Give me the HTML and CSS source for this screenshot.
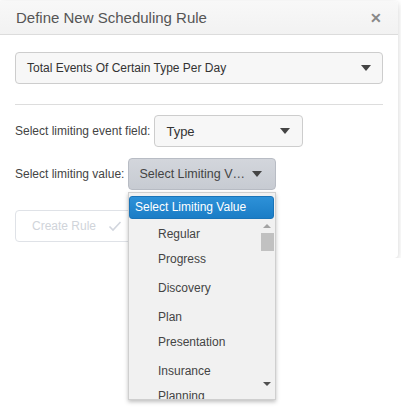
FILE: index.html
```html
<!DOCTYPE html>
<html>
<head>
<meta charset="utf-8">
<link rel="stylesheet" href="styles.css">
</head>
<body>
<div class="dialog">
  <div class="header">
    <span class="title">Define New Scheduling Rule</span>
    <span class="close">&#x2715;</span>
  </div>
  <div class="content">
    <div class="select wide"><span>Total Events Of Certain Type Per Day</span><i class="caret"></i></div>
    <div class="sep"></div>
    <div class="row row1">
      <label>Select limiting event field:</label>
      <div class="select field"><span>Type</span><i class="caret"></i></div>
    </div>
    <div class="row row2">
      <label>Select limiting value:</label>
      <div class="select value active"><span>Select Limiting V…</span><i class="caret"></i></div>
    </div>
    <div class="btn">
      <span>Create Rule</span>
      <svg width="14" height="12" viewBox="0 0 14 12"><path d="M1.5 6.5 L5 10 L12.5 2" fill="none" stroke="#d2d6de" stroke-width="1.6"/></svg>
    </div>
  </div>
</div>
<div class="dropdown">
  <div class="hl">Select Limiting Value</div>
  <div class="opts">
    <div class="list">
      <div class="opt">Regular</div>
      <div class="opt">Progress</div>
      <div class="opt gap">Discovery</div>
      <div class="opt gap">Plan</div>
      <div class="opt">Presentation</div>
      <div class="opt gap">Insurance</div>
      <div class="opt">Planning</div>
    </div>
    <div class="scroll">
      <i class="up"></i>
      <div class="thumb"></div>
      <i class="down"></i>
    </div>
  </div>
</div>
</body>
</html>
```
FILE: styles.css
```css
html, body {
  margin: 0;
  padding: 0;
  background: #fff;
  font-family: "Liberation Sans", Arial, sans-serif;
  font-size: 12px;
  color: #444;
}
.dialog {
  width: 398px;
  margin-top: 1px;
  background: #fff;
  border-radius: 0 4px 4px 0;
  box-shadow: 0 2px 6px rgba(0,0,0,0.18);
}
.header {
  height: 33px;
  display: flex;
  align-items: center;
  justify-content: space-between;
  padding: 0 16px;
  background: linear-gradient(#f8f8f8, #f2f2f2);
  border-bottom: 1px solid #dcdcdc;
  border-radius: 0 4px 0 0;
}
.title {
  font-size: 15px;
  color: #555;
}
.close {
  font-size: 14px;
  font-weight: bold;
  color: #888;
}
.content {
  padding: 17px 15px 16px 15px;
}
.select {
  box-sizing: border-box;
  height: 32px;
  display: flex;
  align-items: center;
  justify-content: space-between;
  padding: 0 11px 0 11px;
  border: 1px solid #cdcdcd;
  border-radius: 4px;
  background: #f7f7f7;
  color: #333;
  font-size: 13px;
}
.wide {
  width: 368px;
  font-size: 12px;
}
.caret {
  width: 0;
  height: 0;
  border-left: 5px solid transparent;
  border-right: 5px solid transparent;
  border-top: 6px solid #444;
}
.sep {
  height: 1px;
  background: #ddd;
  margin: 20px 0 10px;
  width: 368px;
}
.row {
  display: flex;
  align-items: center;
  gap: 4px;
}
.row label {
  color: #444;
}
.row2 {
  margin-top: 11px;
}
.field {
  width: 149px;
  padding-right: 12px;
}
.value {
  width: 148px;
  padding-left: 10px;
  padding-right: 13px;
  font-size: 12.5px;
}
.active {
  background: linear-gradient(#d3d6dc, #c7cbd2);
  border-color: #b8bcc4;
  color: #444;
}
.btn {
  margin-top: 20px;
  box-sizing: border-box;
  width: 130px;
  height: 32px;
  display: flex;
  align-items: center;
  gap: 12px;
  padding-left: 16px;
  border: 1px solid #dfe2e7;
  border-radius: 4px;
  color: #d0d4da;
}
.dropdown {
  position: absolute;
  left: 128px;
  top: 192px;
  width: 148px;
  height: 208px;
  box-sizing: border-box;
  background: #f1f1f1;
  border: 1px solid #cfcfcf;
  box-shadow: 0 2px 4px rgba(0,0,0,0.25);
  display: flex;
  flex-direction: column;
  overflow: hidden;
}
.hl {
  margin: 3px 1px 0 0;
  height: 23px;
  box-sizing: border-box;
  line-height: 21px;
  padding-left: 5px;
  border-radius: 3px;
  background: linear-gradient(#2d91d8, #1b7dc6);
  border: 1px solid #1a74b8;
  color: #fff;
}
.opts {
  flex: 1;
  display: flex;
  overflow: hidden;
}
.list {
  flex: 1;
  padding-top: 3px;
}
.opt {
  height: 25px;
  line-height: 25px;
  padding-left: 29px;
  color: #444;
}
.gap {
  margin-top: 4px;
}
.scroll {
  width: 15px;
  position: relative;
}
.up, .down {
  position: absolute;
  left: 3px;
  width: 0;
  height: 0;
  border-left: 4px solid transparent;
  border-right: 4px solid transparent;
}
.up {
  top: 5px;
  border-bottom: 4px solid #a3a3a3;
}
.down {
  bottom: 13px;
  border-top: 4px solid #505050;
}
.thumb {
  position: absolute;
  left: 1px;
  top: 14px;
  width: 13px;
  height: 18px;
  background: #c1c1c1;
}
```
